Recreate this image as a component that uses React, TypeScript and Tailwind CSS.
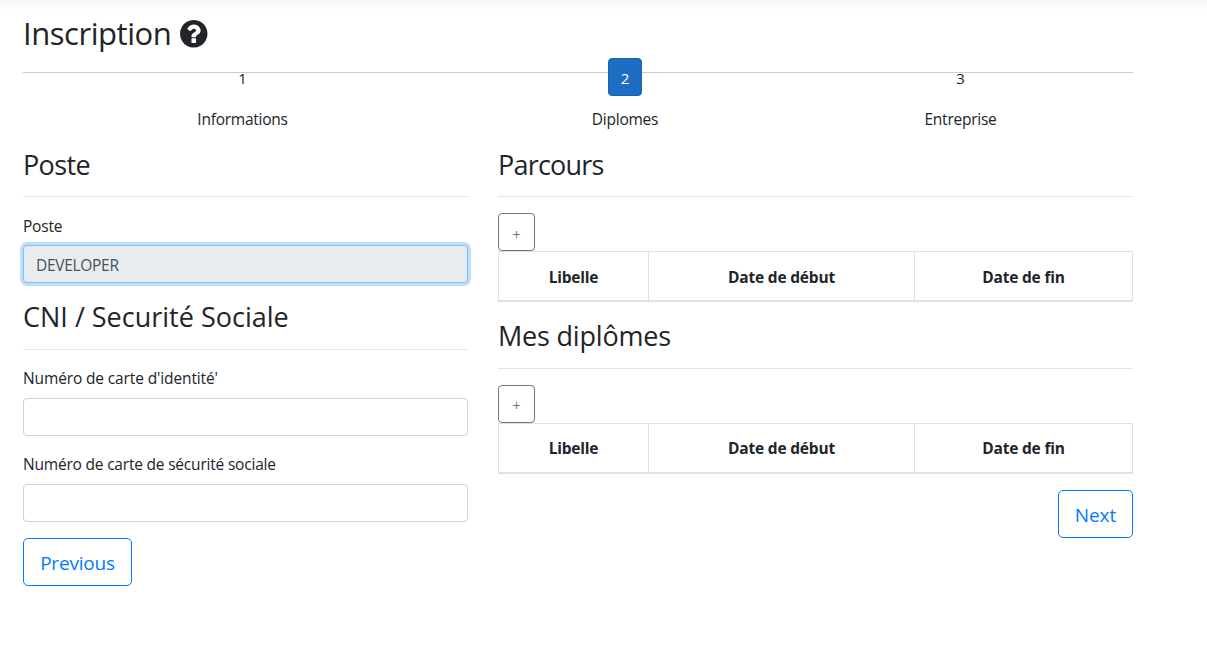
import React from "react";

function HelpIcon({ className }: { className: string }) {
  return (
    <svg viewBox="0 128 1536 1536" fill="currentColor" className={className}>
      <path d="M896 1376v-192q0-14-9-23t-23-9h-192q-14 0-23 9t-9 23v192q0 14 9 23t23 9h192q14 0 23-9t9-23zm256-672q0-88-55.5-163t-138.5-116-170-41q-243 0-371 213-15 24 8 42l132 100q7 6 19 6 16 0 25-12 53-68 86-92 34-24 86-24 48 0 85.5 26t37.5 59q0 38-20 61t-68 45q-63 28-115.5 86.5t-52.5 125.5v36q0 14 9 23t23 9h192q14 0 23-9t9-23q0-19 21.5-49.5t54.5-49.5q32-18 49-28.5t46-35 44.5-48 28-60.5 12.5-81zm384 192q0 209-103 385.5t-279.5 279.5-385.5 103-385.5-103-279.5-279.5-103-385.5 103-385.5 279.5-279.5 385.5-103 385.5 103 279.5 279.5 103 385.5z" />
    </svg>
  );
}

function Title({ children, className }: { children: React.ReactNode; className: string }) {
  return (
    <div className="h-[51px] border-b border-[#e5e5e5]">
      <h3 className={`whitespace-nowrap text-[27px] ${className}`}>{children}</h3>
    </div>
  );
}

function Label({ children, className }: { children: React.ReactNode; className: string }) {
  return <label className={`block h-6 whitespace-nowrap ${className}`}>{children}</label>;
}

function Step({ n, label, active }: { n: number; label: string; active?: boolean }) {
  return (
    <div className="flex flex-col items-center">
      <div
        className={
          active
            ? "flex h-[38px] w-[34px] items-center justify-center rounded border border-[#1861ac] bg-[#1b6ec2] pt-0.5 text-[15px] text-white"
            : "flex h-[38px] w-[34px] items-center justify-center pt-0.5 text-[15px]"
        }
      >
        {n}
      </div>
      <p className="mt-[11px] leading-6 tracking-[-0.25px]">{label}</p>
    </div>
  );
}

function Courses({ plusClassName, className }: { plusClassName: string; className: string }) {
  return (
    <div>
      <button className={`block h-[38px] w-[37px] rounded border border-[#6c757d] text-[14px] text-[#6c757d] ${plusClassName}`}>+</button>
      <table className="h-[51px] w-full table-fixed border-collapse border border-b-2 border-[#dee2e6] text-[15.5px] font-bold tracking-[-0.2px]">
        <thead>
          <tr>
            <th className={`w-[150px] border-r border-[#dee2e6] ${className}`}>Libelle</th>
            <th className={`w-[266px] border-r border-[#dee2e6] ${className}`}>Date de début</th>
            <th className={className}>Date de fin</th>
          </tr>
        </thead>
      </table>
    </div>
  );
}

export default function App() {
  return (
    <main className="h-[645px] overflow-hidden bg-white font-['Open_Sans',sans-serif] text-[15.5px] tracking-[-0.2px] text-[#212529]">
      <div className="h-3 bg-linear-to-b from-[#f8f8f8] to-white" />
      <div className="ml-[23px] w-[1110px]">
        <h2 className="flex h-[46px] items-start text-[31px] leading-[43px] tracking-[-0.45px]">
          <span className="w-[157px]">Inscription</span>
          <HelpIcon className="mt-2 size-[27.5px]" />
        </h2>
        <div className="relative">
          <div className="absolute top-[14px] h-px w-full bg-[#ccc]" />
          <div className="relative grid h-[88px] grid-cols-[439px_326px_345px]">
            <Step n={1} label="Informations" />
            <Step n={2} label="Diplomes" active />
            <Step n={3} label="Entreprise" />
          </div>
        </div>
        <div className="flex gap-[30px]">
          <section className="w-[445px]">
            <Title className="leading-[38px] tracking-[-0.65px]">Poste</Title>
            <div className="pt-4">
              <Label className="leading-[26px]">Poste</Label>
              <input
                disabled
                defaultValue="DEVELOPER"
                className="mt-2 block h-[38px] w-full rounded border border-[#80bdff] bg-[#e9ecef] px-3 pt-0.5 tracking-[-0.3px] text-[#495057] shadow-[0_0_0_3px_rgba(0,123,255,0.25)]"
              />
            </div>
            <div className="pt-4">
              <Title className="leading-[36px] tracking-normal">CNI / Securité Sociale</Title>
            </div>
            <div className="pt-4">
              <Label className="leading-6 tracking-[-0.13px]">Numéro de carte d'identité'</Label>
              <input className="mt-2 block h-[38px] w-full rounded border border-[#ced4da] px-3" />
            </div>
            <div className="pt-4">
              <Label className="leading-6">Numéro de carte de sécurité sociale</Label>
              <input className="mt-2 block h-[38px] w-full rounded border border-[#ced4da] px-3" />
            </div>
            <button className="mt-4 block h-12 w-[109px] rounded-[5px] border border-[#007bff] pt-0.5 text-[19px] text-[#007bff]">Previous</button>
          </section>
          <section className="w-[635px]">
            <Title className="leading-[38px] tracking-[-0.8px]">Parcours</Title>
            <div className="pt-4"><Courses plusClassName="pt-1" className="pt-[3px]" /></div>
            <div className="pt-4"><Title className="leading-[36px] tracking-[-0.2px]">Mes diplômes</Title></div>
            <div className="pt-4"><Courses plusClassName="pt-[3px]" className="pt-px" /></div>
            <button className="mt-4 ml-auto block h-12 w-[75px] rounded-[5px] border border-[#007bff] pt-0.5 text-[19px] tracking-normal text-[#007bff]">Next</button>
          </section>
        </div>
      </div>
    </main>
  );
}
